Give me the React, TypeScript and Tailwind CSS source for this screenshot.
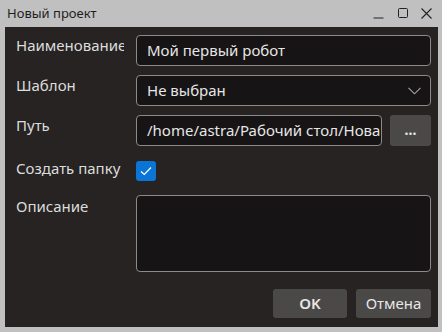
import React from "react";

const font = { fontFamily: '"Noto Sans", "DejaVu Sans", sans-serif' };

export default function App() {
  return (
    <div className="w-[442px] h-[332px] bg-[#c0c0c0] flex flex-col overflow-hidden" style={font}>
      <div className="h-[27px] flex items-center pl-[7px] pr-[10px] text-[13px] text-[#1e1e1e]">
        <span className="flex-1">Новый проект</span>
        <div className="flex items-center gap-[13px] pr-0">
          <svg width="11" height="11" viewBox="0 0 11 11"><line x1="0.5" y1="10" x2="10.5" y2="10" stroke="#222" strokeWidth="1" /></svg>
          <svg width="11" height="11" viewBox="0 0 11 11"><rect x="1.5" y="0.5" width="9" height="9" rx="1" fill="none" stroke="#222" strokeWidth="1" /></svg>
          <svg width="11" height="11" viewBox="0 0 11 11"><path d="M0.5 0.5 L10.5 10.5 M10.5 0.5 L0.5 10.5" stroke="#222" strokeWidth="1.1" /></svg>
        </div>
      </div>
      <div className="ml-[5px] mr-[4px] h-[300px] bg-[#262322] pt-[8px] pl-[11px] pr-[7px] flex flex-col text-[15px] text-[#dcdcdc]">
        <div className="flex h-[31px]">
          <div className="w-[108px] overflow-hidden whitespace-nowrap leading-[20px]">Наименование</div>
          <div className="ml-[12px] flex-1 h-[31px] rounded-[4px] border border-[#8c8a88] bg-[#161414] flex items-center pl-[10px] text-[#e6e6e6]">Мой первый робот</div>
        </div>
        <div className="flex h-[31px] mt-[9px]">
          <div className="w-[108px] leading-[20px]">Шаблон</div>
          <div className="ml-[12px] flex-1 h-[31px] rounded-[4px] border border-[#8c8a88] bg-[#161414] flex items-center pl-[10px] pr-[9px] text-[#e6e6e6]">
            <span className="flex-1">Не выбран</span>
            <svg width="13" height="8" viewBox="0 0 13 8"><path d="M0.5 0.8 L6.5 6.8 L12.5 0.8" fill="none" stroke="#a8a6a4" strokeWidth="1.1" /></svg>
          </div>
        </div>
        <div className="flex h-[31px] mt-[9px]">
          <div className="w-[108px] leading-[20px]">Путь</div>
          <div className="ml-[12px] w-[246px] h-[31px] rounded-[4px] border border-[#8c8a88] bg-[#161414] flex items-center pl-[10px] overflow-hidden whitespace-nowrap text-[#e6e6e6]">/home/astra/Рабочий стол/Нова</div>
          <div className="ml-[8px] w-[41px] h-[31px] rounded-[3px] bg-[#4b4848] flex items-center justify-center text-[#e6e6e6] text-[14px] font-bold leading-none pb-[2px]">...</div>
        </div>
        <div className="flex h-[20px] mt-[15px]">
          <div className="w-[108px] leading-[20px] mt-[-3px] whitespace-nowrap">Создать папку</div>
          <div className="ml-[12px] w-[20px] h-[20px] rounded-[3px] bg-[#0b74d7] flex items-center justify-center">
            <svg width="12" height="10" viewBox="0 0 12 10"><path d="M1 5.5 L4.3 8.5 L11 1.5" fill="none" stroke="#ffffff" strokeWidth="1.2" /></svg>
          </div>
        </div>
        <div className="flex h-[77px] mt-[14px]">
          <div className="w-[108px] leading-[20px] mt-[1px]">Описание</div>
          <div className="ml-[12px] flex-1 h-[77px] rounded-[4px] border border-[#8c8a88] bg-[#161414]"></div>
        </div>
        <div className="flex h-[29px] mt-[17px] justify-end gap-[9px]">
          <div className="w-[74px] h-[29px] rounded-[3px] bg-[#4b4848] flex items-center justify-center text-[#e6e6e6] text-[15px] font-semibold">OK</div>
          <div className="w-[75px] h-[29px] rounded-[3px] bg-[#4b4848] flex items-center justify-center text-[#e6e6e6] text-[15px]">Отмена</div>
        </div>
      </div>
    </div>
  );
}
